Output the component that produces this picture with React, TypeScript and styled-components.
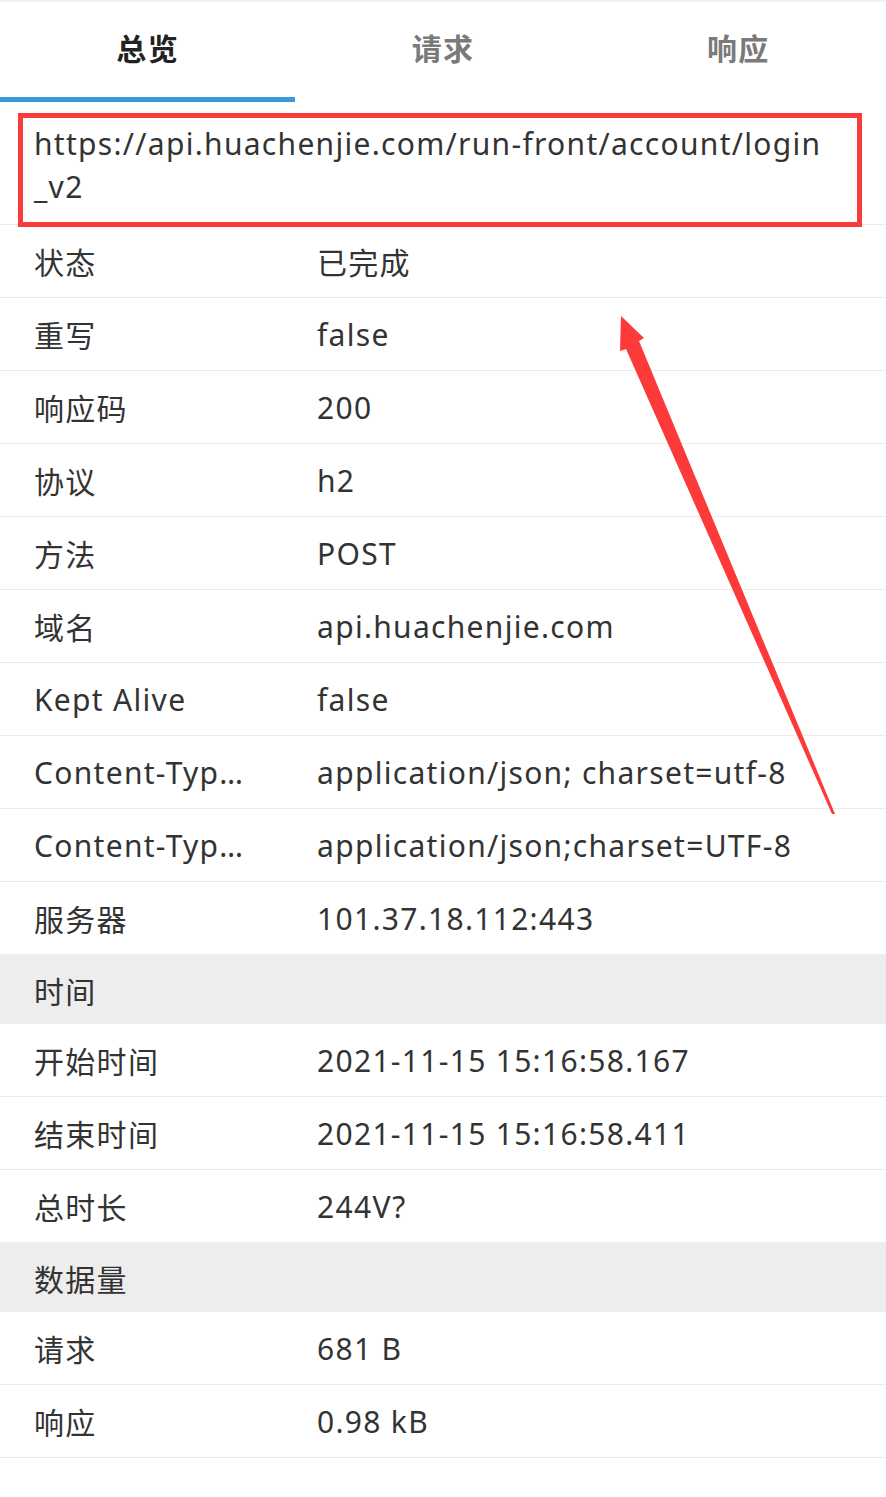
import React from 'react'
import styled, { createGlobalStyle } from 'styled-components';

const GlobalStyle = createGlobalStyle`
    body {
        margin: 0;
        background: #fff;
        font-family: "Noto Sans", "Noto Sans CJK SC", sans-serif;
        letter-spacing: 1.3px;
        color: #333;
    }
`

const Page = styled.div`
    position: relative;
    width: 886px;
    min-height: 1497px;
    background: #fff;
    border-top: 2px solid #f1f3f3;
    box-sizing: border-box;
`

const TabBar = styled.div`
    display: grid;
    grid-template-columns: repeat(3, 1fr);
    height: 100px;
`

const Tab = styled.div<{ active?: boolean }>`
    display: flex;
    align-items: center;
    justify-content: center;
    padding-bottom: 5px;
    font-size: 30px;
    font-weight: 700;
    color: ${({ active }) => active ? '#222' : '#7a7a7a'};
    border-bottom: 5px solid ${({ active }) => active ? '#3a9bdc' : 'transparent'};
    box-sizing: border-box;
`

const UrlBlock = styled.div`
    padding: 11px 24px 0 18px;
    border-bottom: 1px solid #ececec;
`

const RedFrame = styled.div`
    border: 5px solid #fc3a3a;
    padding: 4px 30px 14px 11px;
    margin-bottom: -3px;
    height: 114px;
    box-sizing: border-box;
`

const UrlText = styled.div`
    font-size: 30px;
    line-height: 43px;
    word-break: break-all;
`

const Row = styled.div`
    display: flex;
    align-items: center;
    height: 72px;
    border-bottom: 1px solid #ececec;
    padding-left: 34px;
    font-size: 30px;
`

const Label = styled.div`
    width: 234px;
    margin-right: 49px;
    white-space: nowrap;
    overflow: hidden;
    text-overflow: ellipsis;
    flex-shrink: 0;
`

const Value = styled.div`
    white-space: nowrap;
`

const Section = styled.div`
    display: flex;
    align-items: center;
    height: 69px;
    padding-left: 34px;
    background: #ededed;
    font-size: 30px;
`

const Arrow = styled.svg`
    position: absolute;
    left: 0;
    top: 0;
    pointer-events: none;
`

// labels cut the way the app shows them
const overview: [string, string][] = [
    ['状态', '已完成'],
    ['重写', 'false'],
    ['响应码', '200'],
    ['协议', 'h2'],
    ['方法', 'POST'],
    ['域名', 'api.huachenjie.com'],
    ['Kept Alive', 'false'],
    ['Content-Typ…', 'application/json; charset=utf-8'],
    ['Content-Typ…', 'application/json;charset=UTF-8'],
    ['服务器', '101.37.18.112:443'],
]

const timing: [string, string][] = [
    ['开始时间', '2021-11-15 15:16:58.167'],
    ['结束时间', '2021-11-15 15:16:58.411'],
    ['总时长', '244V?'],
]

const size: [string, string][] = [
    ['请求', '681 B'],
    ['响应', '0.98 kB'],
]

const rows = (list: [string, string][]) =>
    list.map(([k, v], i) => (
        <Row key={i}>
            <Label>{k}</Label>
            <Value>{v}</Value>
        </Row>
    ))

const App = () => {
    return (
        <>
            <GlobalStyle />
            <Page>
                <TabBar>
                    <Tab active>总览</Tab>
                    <Tab>请求</Tab>
                    <Tab>响应</Tab>
                </TabBar>

                <UrlBlock>
                    <RedFrame>
                        <UrlText>https://api.huachenjie.com/run-front/account/login_v2</UrlText>
                    </RedFrame>
                </UrlBlock>

                {rows(overview)}
                <Section>时间</Section>
                {rows(timing)}
                <Section>数据量</Section>
                {rows(size)}

                {/* annotation arrow */}
                <Arrow width="886" height="1497" viewBox="0 0 886 1497">
                    <polygon
                        points="621,314 644,336 639,339 835,812 832,812 626,347 620,349"
                        fill="#fc3a3a"
                    />
                </Arrow>
            </Page>
        </>
    )
};

export default App
